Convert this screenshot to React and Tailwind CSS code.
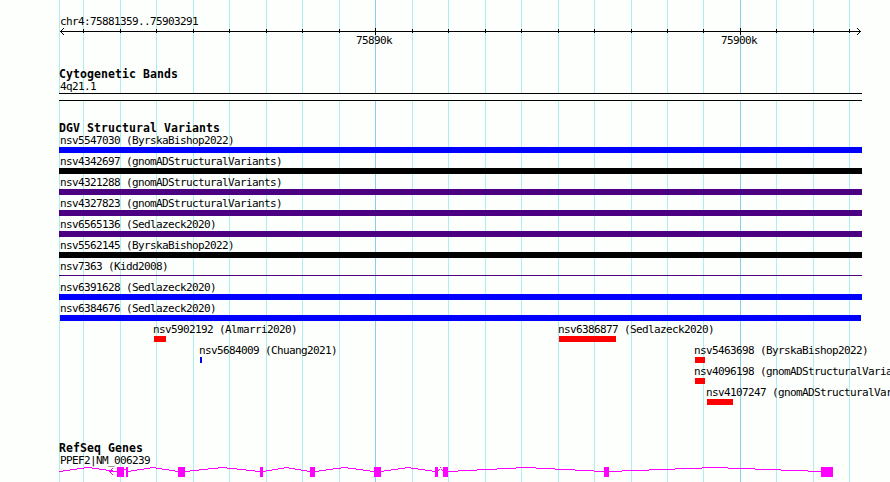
const gridLines = [
  59, 83, 120, 156, 193, 229, 266, 302, 339, 375, 412, 448, 485, 521, 558, 594, 631, 667, 703, 740, 776, 813, 849
];
const majorLines = [375, 740];

const barStyles = {
  blue: 'h-[6px] bg-[#0000ff]',
  black: 'h-[6px] bg-black',
  indigo: 'h-[6px] bg-[#4b0082]',
  red: 'h-[6px] bg-[#ff0000]',
  thin: 'mt-[2px] h-px bg-[#4b0082]'
};

// each row holds one or more features, start/end are in pixels
const variantRows = [
  [{ name: 'nsv5547030 (ByrskaBishop2022)', start: 59, end: 862, kind: 'blue' }],
  [{ name: 'nsv4342697 (gnomADStructuralVariants)', start: 59, end: 862, kind: 'black' }],
  [{ name: 'nsv4321288 (gnomADStructuralVariants)', start: 59, end: 862, kind: 'indigo' }],
  [{ name: 'nsv4327823 (gnomADStructuralVariants)', start: 59, end: 862, kind: 'indigo' }],
  [{ name: 'nsv6565136 (Sedlazeck2020)', start: 59, end: 862, kind: 'indigo' }],
  [{ name: 'nsv5562145 (ByrskaBishop2022)', start: 59, end: 862, kind: 'black' }],
  [{ name: 'nsv7363 (Kidd2008)', start: 59, end: 862, kind: 'thin' }],
  [{ name: 'nsv6391628 (Sedlazeck2020)', start: 59, end: 862, kind: 'blue' }],
  [{ name: 'nsv6384676 (Sedlazeck2020)', start: 60, end: 861, kind: 'blue' }],
  [
    { name: 'nsv5902192 (Almarri2020)', start: 154, end: 166, kind: 'red' },
    { name: 'nsv6386877 (Sedlazeck2020)', start: 559, end: 616, kind: 'red' }
  ],
  [
    { name: 'nsv5684009 (Chuang2021)', start: 200, end: 202, kind: 'blue' },
    { name: 'nsv5463698 (ByrskaBishop2022)', start: 695, end: 705, kind: 'red' }
  ],
  [{ name: 'nsv4096198 (gnomADStructuralVariants)', start: 695, end: 705, kind: 'red' }],
  [{ name: 'nsv4107247 (gnomADStructuralVariants)', start: 707, end: 733, kind: 'red' }]
];

const exons = [
  [117, 124], [126, 128], [178, 185], [260, 263], [310, 315],
  [374, 381], [435, 438], [443, 448], [604, 609], [821, 833]
];

function Label({ children }) {
  return <p className="h-[13px] text-[11px] leading-[13px] tracking-[-0.622px] whitespace-pre">{children}</p>;
}

function TrackTitle({ children }) {
  return <h2 className="h-[13px] pl-[59px] text-[11.5px] leading-[13px] font-bold tracking-[0.077px] whitespace-pre">{children}</h2>;
}

function GridLines() {
  return (
    <svg className="absolute inset-0" width="890" height="482" shapeRendering="crispEdges">
      {gridLines.map((x) => (
        <rect key={x} x={x} y="0" width="1" height="482" fill={majorLines.includes(x) ? '#87ceeb' : '#afeeee'} />
      ))}
    </svg>
  );
}

function Ruler() {
  return (
    <div className="-mt-px">
      <svg className="block" width="890" height="8" shapeRendering="crispEdges">
        <rect x="60" y="4" width="801" height="1" />
        {gridLines.slice(1).map((x) => {
          const major = majorLines.includes(x);
          return <rect key={x} x={x} y={major ? 1 : 2} width="1" height={major ? 7 : 4} />;
        })}
        {[1, 2, 3].map((d) => (
          <g key={d}>
            <rect x={60 + d} y={4 - d} width="1" height="1" />
            <rect x={60 + d} y={4 + d} width="1" height="1" />
            <rect x={860 - d} y={4 - d} width="1" height="1" />
            <rect x={860 - d} y={4 + d} width="1" height="1" />
          </g>
        ))}
      </svg>
      <div className="-mt-px flex pl-[356px]">
        <div className="w-[365px]">
          <Label>75890k</Label>
        </div>
        <Label>75900k</Label>
      </div>
    </div>
  );
}

function Feature({ feature, offset }) {
  const { name, start, end, kind } = feature;
  const labelShift = start <= 60 ? 60 - start : -1;
  return (
    <div className="w-0 shrink-0" style={{ marginLeft: start - offset }}>
      <div style={{ marginLeft: labelShift }}>
        <Label>{name}</Label>
      </div>
      <div className={barStyles[kind]} style={{ width: end - start }} />
    </div>
  );
}

// a shallow peak, stepped one pixel at a time
function Intron({ from, to }) {
  const half = (to - from) / 2;
  const stops = [0, 1, 3, 5, 7, 9, 11, 13, 15, 16].map((n) => Math.round(from + (half * n) / 8));
  return stops.slice(0, -1).map((x, i) => (
    <rect key={i} x={x} y={1 + Math.abs(4 - i)} width={stops[i + 1] - x} height="1" />
  ));
}

function Gene() {
  const introns = [[59, 117], ...exons.slice(1, -1).map((exon, i) => [exon[1], exons[i + 2][0]])];
  return (
    <svg className="-mt-px block" width="890" height="16" fill="#ff00ff" shapeRendering="crispEdges">
      {introns.map(([from, to]) => (
        <Intron key={from} from={from} to={to} />
      ))}
      <rect x="124" y="3" width="2" height="1" />
      <rect x="109" y="5" width="8" height="1" />
      {[1, 2, 3].map((d) => (
        <g key={d}>
          <rect x={109 + d} y={5 - d} width="1" height="1" />
          <rect x={109 + d} y={5 + d} width="1" height="1" />
        </g>
      ))}
      {exons.map(([from, to]) => (
        <rect key={from} x={from} y="1" width={to - from} height="10" />
      ))}
    </svg>
  );
}

export default function App() {
  return (
    <main className="relative h-[482px] w-[890px] overflow-hidden bg-[#fdfffc] font-['DejaVu_Sans_Mono',monospace] text-black">
      <GridLines />
      <div className="relative">
        <header className="pt-[15px]">
          <div className="pl-[60px]">
            <Label>chr4:75881359..75903291</Label>
          </div>
          <Ruler />
        </header>

        <section className="pt-[21px]">
          <TrackTitle>Cytogenetic Bands</TrackTitle>
          <div className="-mt-px pl-[60px]">
            <Label>4q21.1</Label>
          </div>
          <div className="ml-[59px] h-[8px] w-[803px] border-y border-black bg-[#fdfffc]" />
        </section>

        <section className="pt-[21px]">
          <TrackTitle>DGV Structural Variants</TrackTitle>
          <div className="-mt-px grid gap-[2px]">
            {variantRows.map((row) => (
              <div key={row[0].name} className="flex h-[19px]">
                {row.map((feature, i) => (
                  <Feature key={feature.name} feature={feature} offset={i > 0 ? row[i - 1].start : 0} />
                ))}
              </div>
            ))}
          </div>
        </section>

        <section className="pt-[37px]">
          <TrackTitle>RefSeq Genes</TrackTitle>
          <div className="-mt-px pl-[60px]">
            <Label>PPEF2|NM_006239</Label>
          </div>
          <Gene />
        </section>
      </div>
    </main>
  );
}
